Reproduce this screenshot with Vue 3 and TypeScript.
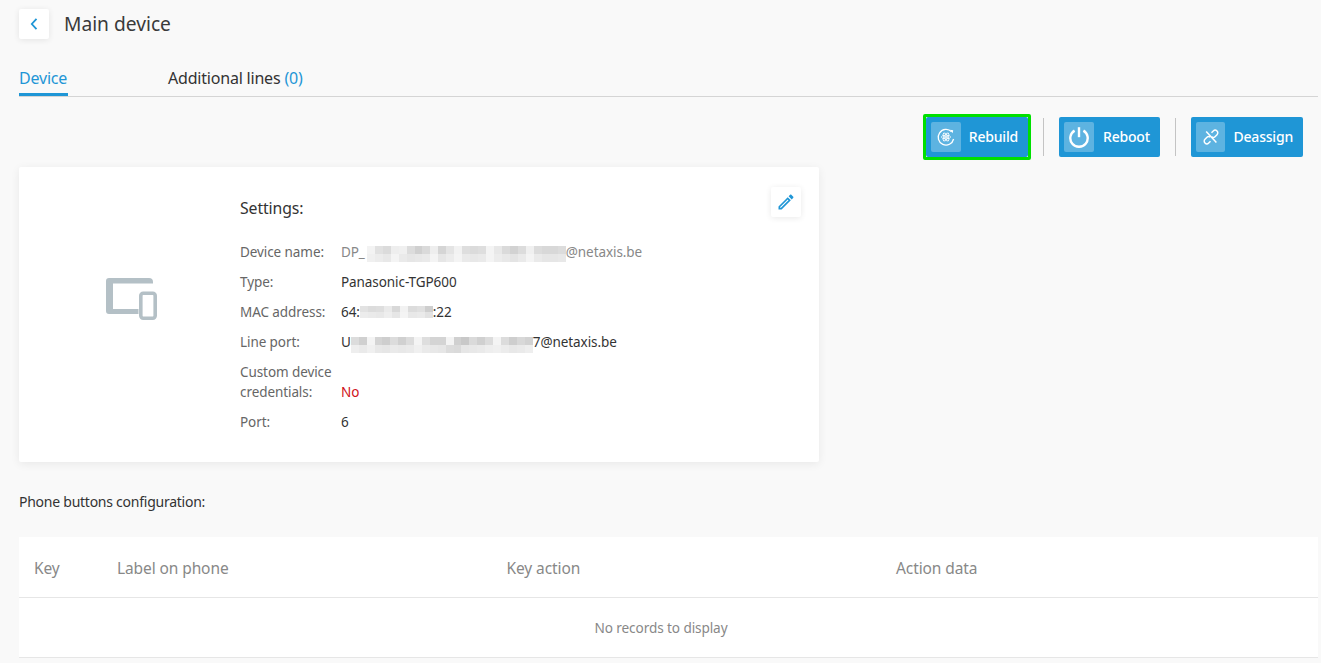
<script setup lang="ts">
const nameBlur = [
  [249,231,225,244,246,226,214,224,244,219,234,248,228,225,228,250,238,224,216,226,246,226,222,222,226],
  [246,242,238,250,240,236,238,240,250,236,242,250,240,238,240,250,242,238,234,240,250,240,236,236,238],
];
const macBlur = [
  [232,226,228,240,222,248,226,230,212],
  [242,240,238,244,236,250,238,240,232],
];
const lineBlur = [
  [226,214,250,218,212,226,214,226,250,228,218,218,250,214,206,224,214,226,250,226,212,222,216],
  [244,240,246,238,236,240,238,240,246,240,238,236,226,224,236,238,240,244,246,242,238,240,244],
];
function cellStyle(v: number) {
  const c = v - 6;
  return { backgroundColor: `rgb(${c},${c},${c})` };
}
const heads = [
  { label: 'Key', w: '83px' },
  { label: 'Label on phone', w: '389.5px' },
  { label: 'Key action', w: '389.5px' },
  { label: 'Action data', w: 'auto' },
];
</script>

<template>
  <div class="page">
    <header class="top">
      <button class="back" aria-label="Back">
        <svg width="10" height="14" viewBox="0 0 10 14"><path d="M7.5 1.8 2.8 7l4.7 5.2" fill="none" stroke="#1f96d6" stroke-width="1.8"/></svg>
      </button>
      <h1>Main device</h1>
    </header>

    <nav class="tabs">
      <a class="tab active">Device</a>
      <a class="tab">Additional lines <span class="count">(0)</span></a>
    </nav>

    <div class="actions">
      <div class="focus">
        <button class="act">
          <span class="ico">
            <svg width="20" height="20" viewBox="0 0 20 20" fill="none" stroke="#fff">
              <path d="M15.6 4.8A7.8 7.8 0 1 0 17.6 12" stroke-width="1.3"/>
              <path d="M14.2 2.8l3 .4-.6 3z" fill="#fff" stroke="none"/>
              <ellipse cx="10" cy="10" rx="4.6" ry="1.9" stroke-width=".8"/>
              <ellipse cx="10" cy="10" rx="4.6" ry="1.9" stroke-width=".8" transform="rotate(60 10 10)"/>
              <ellipse cx="10" cy="10" rx="4.6" ry="1.9" stroke-width=".8" transform="rotate(120 10 10)"/>
              <circle cx="10" cy="10" r="1" fill="#fff" stroke="none"/>
            </svg>
          </span>
          <span class="act-label">Rebuild</span>
        </button>
      </div>
      <i class="sep first"></i>
      <button class="act reboot">
        <span class="ico">
          <svg width="22" height="22" viewBox="0 0 22 22" fill="none" stroke="#fff" stroke-width="2.4">
            <path d="M11 1.2v10"/>
            <path d="M6.6 4.6a8.7 8.7 0 1 0 8.8 0"/>
          </svg>
        </span>
        <span class="act-label">Reboot</span>
      </button>
      <i class="sep"></i>
      <button class="act deassign">
        <span class="ico">
          <svg width="18" height="18" viewBox="0 0 18 18" fill="none" stroke="#fff" stroke-width="1.5">
            <path d="M9.5 4.8 11.3 3a2.6 2.6 0 0 1 3.7 3.7l-2 2a2.6 2.6 0 0 1-3.4.2"/>
            <path d="M8.5 13.2 6.7 15A2.6 2.6 0 0 1 3 11.3l2-2a2.6 2.6 0 0 1 3.4-.2"/>
            <path d="M4.2 3.6 14.4 14.6"/>
          </svg>
        </span>
        <span class="act-label">Deassign</span>
      </button>
    </div>

    <section class="card">
      <div class="card-icon">
        <svg width="51" height="42" viewBox="0 0 51 42">
          <path d="M3 0H43a4 4 0 0 1 4 4v1.5H7V31h25.5v5H3a3 3 0 0 1-3-3V3a3 3 0 0 1 3-3z" fill="#b4c0c6"/>
          <rect x="34.8" y="15.3" width="14.4" height="24.9" rx="2.4" fill="none" stroke="#b4c0c6" stroke-width="3.6"/>
        </svg>
      </div>
      <div class="info">
        <h2>Settings:</h2>
        <dl>
          <div class="row">
            <dt>Device name:</dt>
            <dd class="muted">DP_<span class="mosaic name"><span v-for="(r, ri) in nameBlur" :key="ri" class="mrow"><i v-for="(v, i) in r" :key="i" :style="cellStyle(v)"></i></span></span>@netaxis.be</dd>
          </div>
          <div class="row"><dt>Type:</dt><dd>Panasonic-TGP600</dd></div>
          <div class="row">
            <dt>MAC address:</dt>
            <dd>64:<span class="mosaic mac"><span v-for="(r, ri) in macBlur" :key="ri" class="mrow"><i v-for="(v, i) in r" :key="i" :style="cellStyle(v)"></i></span></span>:22</dd>
          </div>
          <div class="row">
            <dt>Line port:</dt>
            <dd>U<span class="mosaic line"><span v-for="(r, ri) in lineBlur" :key="ri" class="mrow"><i v-for="(v, i) in r" :key="i" :style="cellStyle(v)"></i></span></span>7@netaxis.be</dd>
          </div>
          <div class="row"><dt>Custom device credentials:</dt><dd class="no">No</dd></div>
          <div class="row"><dt>Port:</dt><dd>6</dd></div>
        </dl>
      </div>
      <button class="edit" aria-label="Edit">
        <svg width="20" height="20" viewBox="0 0 24 24"><path fill="#1f96d6" fill-rule="evenodd" d="M3 17.25V21h3.75L17.81 9.94l-3.75-3.75L3 17.25zM5.92 19H5v-.92l9.06-9.06.92.92L5.92 19zM20.71 5.63l-2.34-2.34c-.2-.2-.45-.29-.71-.29s-.51.1-.7.29l-1.83 1.83 3.75 3.75 1.83-1.83c.39-.39.39-1.02 0-1.41z"/></svg>
      </button>
    </section>

    <p class="sub">Phone buttons configuration:</p>

    <section class="table">
      <div class="thead">
        <span v-for="h in heads" :key="h.label" class="th" :style="{ width: h.w }">{{ h.label }}</span>
      </div>
      <div class="empty">No records to display</div>
    </section>
  </div>
</template>

<style>
html, body { margin: 0; background: #f9f9f9; }
</style>

<style scoped>
.page {
  box-sizing: border-box;
  height: 663px;
  overflow: hidden;
  padding: 9px 3px 0 19px;
  background: #f9f9f9;
  font-family: "Noto Sans", "Open Sans", sans-serif;
  font-size: 14px;
  color: #333;
}
button { border: 0; padding: 0; font: inherit; cursor: pointer; }
.top { display: flex; align-items: center; gap: 15px; height: 30px; }
.back, .edit {
  display: flex; align-items: center; justify-content: center;
  width: 30px; height: 30px; background: #fff; border-radius: 2px;
  box-shadow: 0 1px 6px rgba(0,0,0,.09);
}
h1 { margin: 0; padding-bottom: 2px; font-size: 19.2px; font-weight: 400; color: #3a3a3a; }
.tabs {
  display: flex; gap: 100px; height: 31px; margin-top: 26px;
  border-bottom: 1px solid #d5d5d5;
}
.tab { font-size: 16px; line-height: 27px; height: 31px; box-sizing: border-box; letter-spacing: -.2px; }
.tab.active { color: #1f96d6; border-bottom: 3px solid #1f96d6; width: 49px; }
.count { color: #1f96d6; }
.actions {
  display: flex; justify-content: flex-end; align-items: center;
  margin-top: 17px; padding-right: 15px; height: 46px;
}
.focus { border: 3px solid #00e000; border-radius: 2px; display: flex; }
.act {
  display: flex; align-items: center; height: 40px; padding: 0 10px 0 5px; gap: 8px;
  background: #1f96d6; color: #fff; border-radius: 2px;
  font-size: 14px; font-weight: 500; letter-spacing: -.2px;
}
.act-label { padding-bottom: 2px; }
.act.reboot { width: 101px; gap: 9px; box-sizing: border-box; }
.act.deassign { width: 112px; box-sizing: border-box; }
.ico {
  width: 30px; height: 30px; display: flex; align-items: center; justify-content: center;
  background: rgba(255,255,255,.28); border-radius: 2px;
}
.sep { width: 1px; height: 38px; background: #c4c4c4; margin: 0 15px; }
.sep.first { margin-left: 12px; }
.card {
  position: relative; display: flex; width: 800px; height: 295px; margin-top: 7px;
  background: #fff; border-radius: 2px; box-shadow: 0 2px 10px rgba(0,0,0,.07);
}
.card-icon { width: 221px; box-sizing: border-box; padding: 111px 0 0 87px; }
.info { padding-top: 31px; }
h2 { margin: 0 0 24px; font-size: 15.8px; line-height: 20px; font-weight: 400; color: #333; letter-spacing: -.1px; }
dl { margin: 0; display: flex; flex-direction: column; gap: 10px; }
.row { display: flex; line-height: 20px; font-size: 13.5px; letter-spacing: -.08px; }
dt { width: 101px; color: #666; padding-right: 5px; box-sizing: border-box; }
dd { margin: 0; display: flex; align-items: center; color: #333; height: 20px; align-self: flex-end; }
dd.muted { color: #888; }
dd.no { color: #d0121b; }
.mosaic { display: flex; flex-direction: column; flex: none; }
.mrow { display: flex; flex: 1; }
.mrow i { flex: 1; }
.mosaic.name { width: 199px; height: 16px; margin: 4px 0 0 2px; }
.mosaic.mac { width: 73px; height: 12px; }
.mosaic.line { width: 182px; height: 16px; margin-top: 5px; }
.edit { position: absolute; top: 20px; right: 18px; }
.sub { margin: 30px 0 0; font-size: 14px; line-height: 20px; color: #333; letter-spacing: -.25px; }
.table { margin-top: 25px; background: #fff; }
.thead { display: flex; align-items: center; height: 61px; padding: 2px 0 0 15px; box-sizing: border-box; border-bottom: 1px solid #e6e6e6; }
.th { font-size: 15.5px; color: #888; letter-spacing: -.1px; }
.empty {
  height: 60px; display: flex; align-items: center; justify-content: center;
  padding: 0 15px 1px 0; box-sizing: border-box;
  font-size: 13.6px; color: #888; border-bottom: 1px solid #e6e6e6; letter-spacing: -.1px;
}
</style>
